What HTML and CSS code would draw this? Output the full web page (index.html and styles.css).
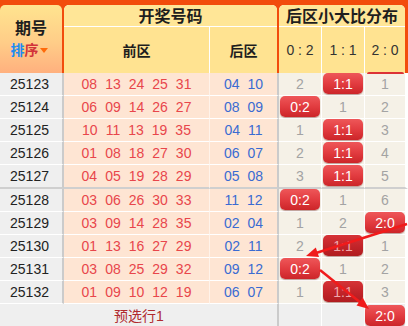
FILE: index.html
```html
<!DOCTYPE html>
<html lang="zh-CN">
<head>
<meta charset="utf-8">
<title>后区小大比分布</title>
<link rel="stylesheet" href="styles.css">
</head>
<body>
<div class="chart">
  <div class="head">
    <div class="hperiod">
      <div class="ptitle">期号</div>
      <div class="sort"><span class="s1">排</span><span class="s2">序</span><span class="tri"></span></div>
    </div>
    <div class="hgroup">
      <div class="gtitle">开奖号码</div>
      <div class="subs draw">
        <div class="sub bold">前区</div>
        <div class="sub bold">后区</div>
      </div>
    </div>
    <div class="hgroup">
      <div class="gtitle">后区小大比分布</div>
      <div class="subs ratio">
        <div class="sub">0 : 2</div>
        <div class="sub">1 : 1</div>
        <div class="sub">2 : 0</div>
      </div>
    </div>
  </div>

  <div class="rows">
    <div class="row">
      <div class="c no">25123</div>
      <div class="c fr"><span>08</span><span>13</span><span>24</span><span>25</span><span>31</span></div>
      <div class="c bk"><span>04</span><span>10</span></div>
      <div class="c d">2</div>
      <div class="c d"><span class="badge">1:1</span></div>
      <div class="c d cut">1</div>
    </div>
    <div class="row">
      <div class="c no">25124</div>
      <div class="c fr"><span>06</span><span>09</span><span>14</span><span>26</span><span>27</span></div>
      <div class="c bk"><span>08</span><span>09</span></div>
      <div class="c d"><span class="badge">0:2</span></div>
      <div class="c d">1</div>
      <div class="c d">2</div>
    </div>
    <div class="row">
      <div class="c no">25125</div>
      <div class="c fr"><span>10</span><span>11</span><span>13</span><span>19</span><span>35</span></div>
      <div class="c bk"><span>04</span><span>11</span></div>
      <div class="c d">1</div>
      <div class="c d"><span class="badge">1:1</span></div>
      <div class="c d">3</div>
    </div>
    <div class="row">
      <div class="c no">25126</div>
      <div class="c fr"><span>01</span><span>08</span><span>18</span><span>27</span><span>30</span></div>
      <div class="c bk"><span>06</span><span>07</span></div>
      <div class="c d">2</div>
      <div class="c d"><span class="badge">1:1</span></div>
      <div class="c d">4</div>
    </div>
    <div class="row sep">
      <div class="c no">25127</div>
      <div class="c fr"><span>04</span><span>05</span><span>19</span><span>28</span><span>29</span></div>
      <div class="c bk"><span>05</span><span>08</span></div>
      <div class="c d">3</div>
      <div class="c d"><span class="badge">1:1</span></div>
      <div class="c d">5</div>
    </div>
    <div class="row">
      <div class="c no">25128</div>
      <div class="c fr"><span>03</span><span>06</span><span>26</span><span>30</span><span>33</span></div>
      <div class="c bk"><span>11</span><span>12</span></div>
      <div class="c d"><span class="badge">0:2</span></div>
      <div class="c d">1</div>
      <div class="c d">6</div>
    </div>
    <div class="row">
      <div class="c no">25129</div>
      <div class="c fr"><span>03</span><span>09</span><span>14</span><span>28</span><span>35</span></div>
      <div class="c bk"><span>02</span><span>04</span></div>
      <div class="c d">1</div>
      <div class="c d">2</div>
      <div class="c d"><span class="badge">2:0</span></div>
    </div>
    <div class="row">
      <div class="c no">25130</div>
      <div class="c fr"><span>01</span><span>13</span><span>16</span><span>27</span><span>29</span></div>
      <div class="c bk"><span>02</span><span>11</span></div>
      <div class="c d">2</div>
      <div class="c d"><span class="badge dim">1:1</span></div>
      <div class="c d">1</div>
    </div>
    <div class="row">
      <div class="c no">25131</div>
      <div class="c fr"><span>03</span><span>08</span><span>25</span><span>29</span><span>32</span></div>
      <div class="c bk"><span>09</span><span>12</span></div>
      <div class="c d"><span class="badge">0:2</span></div>
      <div class="c d">1</div>
      <div class="c d">2</div>
    </div>
    <div class="row">
      <div class="c no">25132</div>
      <div class="c fr"><span>01</span><span>09</span><span>10</span><span>12</span><span>19</span></div>
      <div class="c bk"><span>06</span><span>07</span></div>
      <div class="c d">1</div>
      <div class="c d"><span class="badge dim">1:1</span></div>
      <div class="c d">3</div>
    </div>
    <div class="row foot">
      <div class="c ftxt">预选行1</div>
      <div class="c d"></div>
      <div class="c d"></div>
      <div class="c d"><span class="badge">2:0</span></div>
    </div>
  </div>

  <svg class="arrows" width="408" height="326" viewBox="0 0 408 326">
    <line x1="407" y1="224" x2="316" y2="253" stroke="#f01b1b" stroke-width="2.5"/>
    <polygon points="306,256 319,257 315.8,247.5" fill="#f01b1b"/>
    <line x1="320" y1="270" x2="361" y2="303" stroke="#f01b1b" stroke-width="2.5"/>
    <polygon points="369,309 356.5,305.4 362.7,297.6" fill="#f01b1b"/>
  </svg>
</div>
</body>
</html>
```
FILE: styles.css
```css
* {
  box-sizing: border-box;
  margin: 0;
  padding: 0;
}

body {
  margin: 0;
  background: #fff;
  font-family: "Liberation Sans", Arial, "Noto Sans CJK SC", sans-serif;
  font-size: 14px;
  color: #222;
}

.chart {
  width: 408px;
  position: relative;
}

/* ---------- header ---------- */
.head {
  display: grid;
  grid-template-columns: 62px 213px 126px;
  column-gap: 2px;
  padding: 5px 3px 0 0;
  background: #f24c0c;
  font-family: "Noto Sans CJK SC", sans-serif;
  color: #1e1e1e;
}

.hperiod {
  height: 68px;
  border-radius: 5px 5px 0 0;
  background: linear-gradient(#ffe48f, #ffcd88 55%, #ffb07e);
  display: flex;
  flex-direction: column;
  align-items: center;
  padding-top: 12px;
}

.ptitle {
  font-size: 16px;
  font-weight: bold;
  line-height: 20px;
}

.sort {
  font-size: 14px;
  font-weight: bold;
  line-height: 18px;
  display: flex;
  align-items: center;
  margin: 3px 0 0 -4px;
}

.s1 { color: #1e8cf0; }
.s2 { color: #d2323a; }

.tri {
  width: 0;
  height: 0;
  margin-left: 1px;
  margin-top: 2px;
  border-left: 4px solid transparent;
  border-right: 4px solid transparent;
  border-top: 5px solid #ff6a0a;
}

.hgroup {
  border-radius: 5px 5px 0 0;
  background: #fff;
}

.gtitle {
  height: 21px;
  line-height: 21px;
  margin-bottom: 1px;
  border-radius: 5px 5px 0 0;
  background: #ffe697;
  text-align: center;
  font-size: 16px;
  font-weight: bold;
}

.subs {
  display: grid;
  column-gap: 1px;
  height: 46px;
}

.subs.draw { grid-template-columns: 145px 67px; }
.subs.ratio { grid-template-columns: 42px 42px 40px; }

.sub {
  background: #ffe391;
  display: flex;
  align-items: center;
  justify-content: center;
  font-family: "Liberation Sans", Arial, sans-serif;
  font-size: 14px;
  color: #333;
}

.sub.bold {
  font-family: "Noto Sans CJK SC", sans-serif;
  font-weight: bold;
  color: #1e1e1e;
}

/* ---------- rows ---------- */
.row {
  display: grid;
  grid-template-columns: 64px 146px 69px 43px 43px 43px;
  height: 23px;
}

.c {
  display: flex;
  align-items: center;
  justify-content: center;
  border-bottom: 1px solid #fff;
  position: relative;
}

.no {
  background: #efefef;
  border-right: 2px solid #cbcbcb;
  color: #222;
  padding-right: 3px;
}

.fr {
  background: #fee5d3;
  border-right: 1px solid #fff3ea;
  color: #e8464b;
}

.bk {
  background: #fee5d3;
  border-right: 2px solid #cbcbcb;
  color: #3a6bd2;
}

.fr span,
.bk span {
  margin: 0 4px;
}

.d {
  background: #f5f1e7;
  border-right: 1px solid #fff;
  color: #a3a3a3;
}

.d:last-child {
  border-right: 3px solid #fff;
}

.row.sep {
  height: 24px;
}

.row.sep .c {
  border-bottom: 2px solid #cfcfcf;
}

.cut::before {
  content: "";
  position: absolute;
  top: -1px;
  left: 2px;
  right: 1px;
  height: 2px;
  border-radius: 3px 3px 0 0;
  background: #dc3236;
}

.badge {
  width: 40px;
  height: 21px;
  margin-top: -1px;
  border-radius: 5px;
  background: linear-gradient(#ee5759, #e23c40 50%, #cc2529);
  color: #fff;
  display: flex;
  align-items: center;
  justify-content: center;
  font-size: 14px;
  box-shadow: 0 1px 1px rgba(90, 0, 0, 0.35);
}

.badge.dim {
  background: linear-gradient(#d63337, #c4252a 50%, #b01c20);
  color: #f0a9ab;
}

/* ---------- footer ---------- */
.row.foot {
  grid-template-columns: 279px 43px 43px 43px;
  height: 22px;
}

.foot .c {
  border-bottom: 0;
}

.ftxt {
  background: #efefef;
  border-right: 2px solid #cbcbcb;
  color: #b02a2e;
  padding-left: 1px;
}

.foot .d {
  background: #efefef;
}

.foot .badge {
  margin-top: 1px;
}

/* ---------- arrows overlay ---------- */
.arrows {
  position: absolute;
  left: 0;
  top: 0;
  pointer-events: none;
}
```
